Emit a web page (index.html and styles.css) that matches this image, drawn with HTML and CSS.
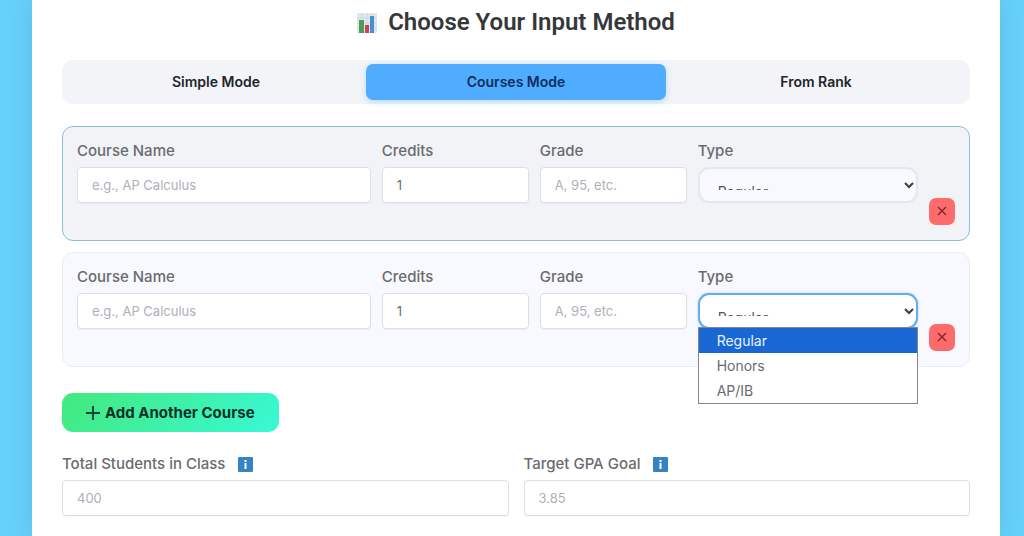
FILE: index.html
```
<!DOCTYPE html>
<html lang="en">
<head>
<meta charset="utf-8">
<meta name="viewport" content="width=device-width, initial-scale=1">
<title>Choose Your Input Method</title>
<link rel="stylesheet" href="styles.css">
</head>
<body>
<main class="card">
  <h2 class="title">
    <svg class="title-icon" viewBox="0 0 20 20" aria-hidden="true">
      <rect width="20" height="20" rx="1" fill="#dfe8ef"/>
      <path d="M0 5h20M0 10h20M0 15h20M5 0v20M10 0v20M15 0v20" stroke="#c9d9e6" stroke-width="1"/>
      <rect x="2" y="7" width="5" height="13" fill="#4f9a57"/>
      <rect x="8" y="12" width="4" height="8" fill="#d33f50"/>
      <rect x="13" y="3" width="4" height="17" fill="#4a8fd0"/>
    </svg>
    Choose Your Input Method
  </h2>

  <div class="tabs" role="tablist">
    <button class="tab" type="button" role="tab">Simple Mode</button>
    <button class="tab tab-active" type="button" role="tab" aria-selected="true">Courses Mode</button>
    <button class="tab" type="button" role="tab">From Rank</button>
  </div>

  <form>
    <div class="courses">
      <div class="course course-hover">
        <div class="field">
          <label class="label" for="name1">Course Name</label>
          <input class="input" id="name1" type="text" placeholder="e.g., AP Calculus">
        </div>
        <div class="field">
          <label class="label" for="credits1">Credits</label>
          <input class="input" id="credits1" type="text" value="1">
        </div>
        <div class="field">
          <label class="label" for="grade1">Grade</label>
          <input class="input" id="grade1" type="text" placeholder="A, 95, etc.">
        </div>
        <div class="field">
          <label class="label" for="type1">Type</label>
          <div class="picker">
            <select class="select" id="type1"><option>Regular</option><option>Honors</option><option>AP/IB</option></select>
            <svg class="chevron" viewBox="0 0 10 8" aria-hidden="true"><path d="M1 2l4 4 4-4"/></svg>
          </div>
        </div>
        <button class="remove" type="button" aria-label="Remove course">
          <svg class="remove-icon" viewBox="0 0 10 10" aria-hidden="true"><path d="M1 1l8 8M9 1l-8 8"/></svg>
        </button>
      </div>

      <div class="course">
        <div class="field">
          <label class="label" for="name2">Course Name</label>
          <input class="input" id="name2" type="text" placeholder="e.g., AP Calculus">
        </div>
        <div class="field">
          <label class="label" for="credits2">Credits</label>
          <input class="input" id="credits2" type="text" value="1">
        </div>
        <div class="field">
          <label class="label" for="grade2">Grade</label>
          <input class="input" id="grade2" type="text" placeholder="A, 95, etc.">
        </div>
        <div class="field">
          <label class="label" for="type2">Type</label>
          <div class="picker">
            <select class="select select-open" id="type2"><option>Regular</option><option>Honors</option><option>AP/IB</option></select>
            <svg class="chevron" viewBox="0 0 10 8" aria-hidden="true"><path d="M1 2l4 4 4-4"/></svg>
            <ul class="menu" role="listbox" aria-label="Type">
              <li class="option option-active" role="option" aria-selected="true">Regular</li>
              <li class="option" role="option">Honors</li>
              <li class="option" role="option">AP/IB</li>
            </ul>
          </div>
        </div>
        <button class="remove" type="button" aria-label="Remove course">
          <svg class="remove-icon" viewBox="0 0 10 10" aria-hidden="true"><path d="M1 1l8 8M9 1l-8 8"/></svg>
        </button>
      </div>
    </div>

    <button class="add" type="button">
      <svg class="add-icon" viewBox="0 0 14 14" aria-hidden="true"><path d="M7 0v14M0 7h14"/></svg>
      Add Another Course
    </button>

    <div class="goals">
      <div>
        <label class="label" for="students">Total Students in Class
          <svg class="info" viewBox="0 0 15 15" aria-hidden="true"><rect width="15" height="15" rx="1" fill="#3583bf"/><path d="M7.500 6v6" stroke="#fff" stroke-width="2"/><path d="M7.500 3v2" stroke="#fff" stroke-width="2"/></svg>
        </label>
        <input class="input" id="students" type="text" placeholder="400">
      </div>
      <div>
        <label class="label" for="goal">Target GPA Goal
          <svg class="info" viewBox="0 0 15 15" aria-hidden="true"><rect width="15" height="15" rx="1" fill="#3583bf"/><path d="M7.500 6v6" stroke="#fff" stroke-width="2"/><path d="M7.500 3v2" stroke="#fff" stroke-width="2"/></svg>
        </label>
        <input class="input" id="goal" type="text" placeholder="3.85">
      </div>
    </div>
  </form>
</main>
</body>
</html>
```
FILE: styles.css
```
* { box-sizing: border-box; }

body {
  margin: 0;
  padding: 0 24px 0 32px;
  min-height: 100vh;
  display: flex;
  background: #66d1fa;
  font-family: Inter, "Liberation Sans", sans-serif;
  color: #6a6b70;
}

button, input, select { font-family: inherit; margin: 0; }

.card {
  flex: 1;
  padding: 8px 30px 20px;
  background: #fff;
  box-shadow: 0 0 20px rgba(60, 120, 190, 0.25);
}

.title {
  display: flex;
  align-items: center;
  justify-content: center;
  gap: 11px;
  margin: 0 0 23px;
  font-family: Roboto, Inter, sans-serif;
  font-size: 24px;
  line-height: 29px;
  font-weight: 600;
  color: #36373a;
}

.title-icon { width: 20px; height: 20px; }

.tabs {
  display: grid;
  grid-template-columns: repeat(3, 1fr);
  margin-bottom: 22px;
  padding: 4px;
  border-radius: 11px;
  background: #f2f4f7;
}

.tab {
  height: 36px;
  padding: 0 0 2px;
  border: 0;
  border-radius: 7px;
  background: transparent;
  font-size: 14px;
  font-weight: 600;
  color: #23252a;
}

.tab-active {
  background: #4facfe;
  color: #0c2f5c;
  box-shadow: 0 2px 6px rgba(79, 172, 254, 0.35);
}

.courses { display: grid; gap: 11px; }

.course {
  display: grid;
  grid-template-columns: minmax(0, 4fr) minmax(0, 2fr) minmax(0, 2fr) minmax(0, 3fr) 26px;
  gap: 11px;
  align-items: end;
  padding: 15px 14px;
  border: 1px solid #e9ecf2;
  border-radius: 11px;
  background: #f8f9fe;
}

.course-hover {
  border-color: #88bfe0;
  background: #f1f3f7;
}

.field { padding-bottom: 22px; }

.label {
  display: flex;
  align-items: center;
  height: 18px;
  margin-bottom: 7px;
  font-size: 15px;
  line-height: 18px;
  font-weight: 500;
}

.input {
  display: block;
  width: 100%;
  height: 36px;
  padding: 0 14px;
  border: 1px solid #dcdfe5;
  border-radius: 4px;
  background: #fff;
  box-shadow: 0 1px 1px rgba(0, 0, 0, 0.04);
  font-size: 13px;
  color: #6a6b70;
}

.input::placeholder { color: #aeb0b8; }

.picker { position: relative; }

.select {
  appearance: none;
  display: block;
  width: 100%;
  height: 36px;
  padding: 12px 18px 11px;
  border: 2px solid #e4e7ee;
  border-radius: 11px;
  background: #f8f9fe;
  font-size: 14px;
  line-height: 22px;
  color: #55565c;
}

.select-open {
  border-color: #62aeeb;
  background: #fff;
  box-shadow: 0 0 3px rgba(79, 172, 254, 0.4);
}

.chevron {
  position: absolute;
  top: 14px;
  right: 4px;
  width: 10px;
  height: 8px;
  fill: none;
  stroke: #3b3c40;
  stroke-width: 2;
  pointer-events: none;
}

.menu {
  position: absolute;
  z-index: 2;
  top: 34px;
  left: 0;
  right: 0;
  margin: 0;
  padding: 0;
  border: 1px solid #85868c;
  background: #fff;
  list-style: none;
}

.option {
  padding: 0 18px;
  font-size: 14px;
  line-height: 25px;
}

.option-active { background: #1967d2; color: #eaf2ff; }

.remove {
  display: grid;
  place-items: center;
  height: 27px;
  padding: 0 0 1px;
  border: 0;
  border-radius: 7px;
  background: #ff6b6b;
}

.remove-icon {
  width: 10px;
  height: 10px;
  fill: none;
  stroke: #7c242c;
  stroke-width: 1.3;
}

.add {
  display: flex;
  align-items: center;
  gap: 5px;
  height: 39px;
  margin: 26px 0 23px;
  padding: 0 24px;
  border: 0;
  border-radius: 11px;
  background: linear-gradient(135deg, #43e97b, #38f9d7);
  font-size: 15px;
  font-weight: 700;
  color: #0d3027;
}

.add-icon { width: 14px; height: 14px; stroke: #17493a; stroke-width: 2; }

.goals {
  display: grid;
  grid-template-columns: 1fr 1fr;
  gap: 15px;
}

.info { width: 15px; height: 15px; margin-left: 13px; }
```
